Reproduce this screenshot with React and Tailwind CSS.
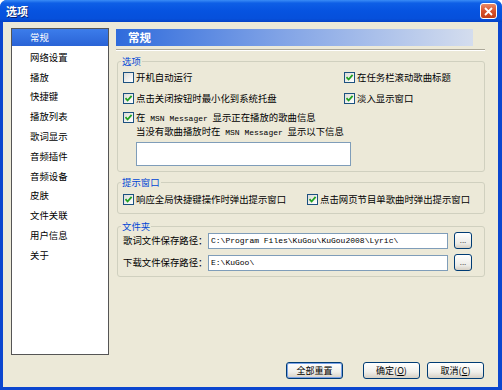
import React from 'react';

const cjk = { fontFamily: '"Noto Sans CJK SC", "Noto Sans", sans-serif' };
const mono = { fontFamily: '"Liberation Mono", "DejaVu Sans Mono", monospace' };

const menu = ['网络设置', '播放', '快捷键', '播放列表', '歌词显示', '音频插件', '音频设备', '皮肤', '文件关联', '用户信息', '关于'];

const Check = ({ on = true }) => (
  <span className="w-[11px] h-[11px] shrink-0 border border-[#1C5180] bg-[linear-gradient(135deg,#DCDCD7,#FFFFFF)] flex items-center justify-center">
    {on && (
      <svg width="9" height="9" viewBox="0 0 9 9">
        <path d="M1.5 4.2 L3.6 6.5 L7.6 1.8" fill="none" stroke="#21A121" strokeWidth="1.8" />
      </svg>
    )}
  </span>
);

const Row = ({ on, children, className = '' }) => (
  <div className={`h-[14px] flex items-center gap-[2px] ${className}`}>
    <Check on={on} />
    <span className="whitespace-pre">{children}</span>
  </div>
);

const Group = ({ title, className = '', children }) => (
  <div className={`relative border border-[#D0D0BF] rounded-[3px] ${className}`}>
    <span className="absolute left-[3px] top-[-8px] px-[1px] bg-[#ECE9D8] text-[#0046D5] leading-[14px]">{title}</span>
    {children}
  </div>
);

const Msn = () => <span style={mono} className="text-[8px]"> MSN Messager </span>;

const Dots = () => (
  <button className="w-[18px] h-[17px] ml-[6px] rounded-[3px] border border-[#003C74] bg-[linear-gradient(180deg,#FFFFFF,#ECEBE6_70%,#D6D0C5)] text-[8px] leading-none text-[#555] flex items-end justify-center pb-[4px]">
    ...
  </button>
);

const Btn = ({ children, focus, className = '' }) => (
  <button
    className={`w-[57px] h-[17px] rounded-[3px] border border-[#003C74] bg-[linear-gradient(180deg,#FFFFFF,#F0EFEA_60%,#D6D0C5)] text-[9px] leading-none flex items-center justify-center ${focus ? 'shadow-[inset_0_0_0_1px_#7BA2E7]' : ''} ${className}`}
  >
    {children}
  </button>
);

export default function App() {
  return (
    <div style={cjk} className="w-[502px] h-[390px] flex flex-col bg-[#0B46CF] rounded-t-[7px] overflow-hidden text-[9.4px] text-black">
      {/* title bar */}
      <div className="h-[22px] shrink-0 flex items-center pl-[6px] pr-[5px] bg-[linear-gradient(180deg,#3A8CF6_0%,#0E5FE6_14%,#0653E0_50%,#0650DB_85%,#0542C6_100%)]">
        <span className="text-white font-bold text-[11px] [text-shadow:1px_1px_0_#0A1E6E]">选项</span>
        <div className="ml-auto w-[17px] h-[16px] rounded-[3px] border border-white bg-[linear-gradient(180deg,#E88A68,#D8522C_50%,#C23E18)] flex items-center justify-center">
          <svg width="9" height="9" viewBox="0 0 9 9">
            <path d="M1 1 L8 8 M8 1 L1 8" stroke="white" strokeWidth="1.8" />
          </svg>
        </div>
      </div>

      <div className="flex-1 ml-[3px] mr-[4px] mb-[3px] bg-[#ECE9D8] flex flex-col">
        <div className="flex pt-[6px] pl-[8px]">
          {/* left list */}
          <div className="w-[98px] h-[327px] shrink-0 border border-[#555] bg-white">
            <div className="h-[17px] flex items-center pl-[18px] text-white bg-[linear-gradient(180deg,#3C7DEB,#2A63D6)]">常规</div>
            <div className="pt-[1px]">
              {menu.map((m) => (
                <div key={m} className="h-[19.8px] flex items-center pl-[18px]">{m}</div>
              ))}
            </div>
          </div>

          {/* right panel */}
          <div className="ml-[7px] w-[369px]">
            <div className="mt-[1px] h-[17px] w-[357px] flex items-center pl-[12px] text-white font-bold text-[11.5px] bg-[linear-gradient(90deg,#2F6BDC,#7FA2E6_45%,#D4DDEE)]">
              常规
            </div>
            <div className="mt-[3px] h-[2px] border-t border-[#ACA899] border-b border-b-white" />

            <Group title="选项" className="mt-[10px] ml-[1px] w-[368px] pl-[5px] pt-[8px] pb-[5px]">
              <div className="flex">
                <Row on={false} className="w-[221px]">开机自动运行</Row>
                <Row>在任务栏滚动歌曲标题</Row>
              </div>
              <div className="flex mt-[7px]">
                <Row className="w-[221px]">点击关闭按钮时最小化到系统托盘</Row>
                <Row>淡入显示窗口</Row>
              </div>
              <Row className="mt-[5px]">在<Msn />显示正在播放的歌曲信息</Row>
              <div className="h-[14px] flex items-center pl-[13px]">
                <span className="whitespace-pre">当没有歌曲播放时在<Msn />显示以下信息</span>
              </div>
              <div className="mt-[4px] ml-[13px] w-[215px] h-[24px] border border-[#7F9DB9] bg-white" />
            </Group>

            <Group title="提示窗口" className="mt-[10px] ml-[1px] w-[368px] pl-[5px] pt-[9px] pb-[7px]">
              <div className="flex">
                <Row className="w-[184px]">响应全局快捷键操作时弹出提示窗口</Row>
                <Row>点击网页节目单歌曲时弹出提示窗口</Row>
              </div>
            </Group>

            <Group title="文件夹" className="mt-[12px] ml-[1px] w-[368px] pl-[5px] pt-[5px] pb-[5px]">
              <div className="h-[17px] flex items-center">
                <span className="w-[85px] whitespace-nowrap">歌词文件保存路径：</span>
                <div style={mono} className="w-[240px] h-[16px] border border-[#7F9DB9] bg-white text-[8px] flex items-center pl-[2px] whitespace-nowrap overflow-hidden">
                  C:\Program Files\KuGou\KuGou2008\Lyric\
                </div>
                <Dots />
              </div>
              <div className="mt-[5px] h-[17px] flex items-center">
                <span className="w-[85px] whitespace-nowrap">下载文件保存路径：</span>
                <div style={mono} className="w-[240px] h-[16px] border border-[#7F9DB9] bg-white text-[8px] flex items-center pl-[2px]">
                  E:\KuGoo\
                </div>
                <Dots />
              </div>
            </Group>
          </div>
        </div>

        {/* bottom buttons */}
        <div className="mt-[7px] flex justify-end pr-[14px]">
          <Btn focus>全部重置</Btn>
          <Btn className="ml-[20px]">确定(<span className="underline">O</span>)</Btn>
          <Btn className="ml-[7px]">取消(<span className="underline">C</span>)</Btn>
        </div>
      </div>
    </div>
  );
}
